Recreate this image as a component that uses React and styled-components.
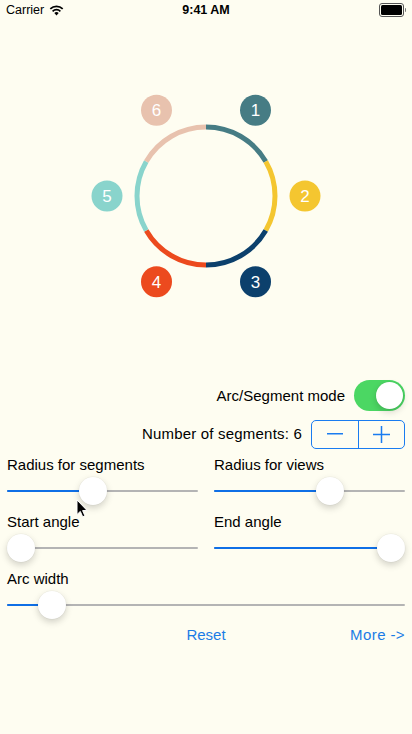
import React from "react";
import styled, { createGlobalStyle } from "styled-components";

const GlobalStyle = createGlobalStyle`
  html, body {
    margin: 0;
    padding: 0;
    background: #fefdf1;
  }
  body {
    font-family: "Liberation Sans", Arial, sans-serif;
    -webkit-font-smoothing: antialiased;
  }
`;

const Screen = styled.div`
  position: relative;
  width: 412px;
  height: 734px;
  background: #fefdf1;
  display: flex;
  flex-direction: column;
  overflow: hidden;
  color: #000;
`;

const StatusBar = styled.div`
  height: 20px;
  display: grid;
  grid-template-columns: 1fr auto 1fr;
  align-items: center;
  padding: 0 6px 0 6px;
  font-size: 12.5px;
`;

const Carrier = styled.div`
  display: flex;
  align-items: center;
  gap: 5px;
`;

const Clock = styled.div`
  font-weight: 700;
`;

const Battery = styled.div`
  justify-self: end;
  display: flex;
  align-items: center;
`;

const BatteryBody = styled.div`
  width: 21px;
  height: 10px;
  border: 1px solid #555;
  border-radius: 3px;
  padding: 1px;
  box-sizing: content-box;
  display: flex;
`;

const BatteryLevel = styled.div`
  flex: 1;
  background: #000;
  border-radius: 1.5px;
`;

const BatteryCap = styled.div`
  width: 1.5px;
  height: 4px;
  margin-left: 1px;
  background: #777;
  border-radius: 0 1px 1px 0;
`;

const Canvas = styled.div`
  height: 360px;
  display: flex;
  justify-content: center;
`;

const Controls = styled.div`
  display: flex;
  flex-direction: column;
  padding: 0 7px;
`;

const RightRow = styled.div`
  display: flex;
  justify-content: flex-end;
  align-items: center;
  gap: ${(p) => p.$gap || 9}px;
  height: ${(p) => p.$height}px;
  margin-top: ${(p) => p.$top || 0}px;
`;

const Label = styled.span`
  font-size: 15px;
  line-height: 18px;
  white-space: nowrap;
  letter-spacing: ${(p) => p.$spacing || 0}px;
`;

const SwitchTrack = styled.div`
  position: relative;
  width: 51px;
  height: 31px;
  border-radius: 16px;
  background: ${(p) => (p.$on ? "#4bd763" : "#e5e5ea")};
`;

const SwitchKnob = styled.div`
  position: absolute;
  top: 2px;
  left: ${(p) => (p.$on ? 22 : 2)}px;
  width: 27px;
  height: 27px;
  border-radius: 50%;
  background: #fff;
  box-shadow: 0 3px 7px rgba(0, 0, 0, 0.16), 0 0 0 0.5px rgba(0, 0, 0, 0.05);
`;

const Stepper = styled.div`
  display: flex;
  width: 94px;
  height: 29px;
  border: 1px solid #1a7cf0;
  border-radius: 5px;
  box-sizing: border-box;
  overflow: hidden;
`;

const StepButton = styled.div`
  flex: 1;
  display: flex;
  align-items: center;
  justify-content: center;
  & + & {
    border-left: 1px solid #1a7cf0;
  }
`;

const SliderGrid = styled.div`
  display: grid;
  grid-template-columns: 1fr 1fr;
  column-gap: 16px;
  row-gap: 5px;
  margin-top: 8px;
`;

const SliderCell = styled.div`
  display: flex;
  flex-direction: column;
  grid-column: ${(p) => (p.$wide ? "1 / span 2" : "auto")};
`;

const SliderBox = styled.div`
  position: relative;
  height: 34px;
  display: flex;
  align-items: center;
`;

const Track = styled.div`
  position: relative;
  flex: 1;
  height: 2px;
  border-radius: 1px;
  background: #b4b4b4;
`;

const Fill = styled.div`
  position: absolute;
  left: 0;
  top: 0;
  bottom: 0;
  border-radius: 1px;
  background: #0f6fe6;
`;

const Thumb = styled.div`
  position: absolute;
  top: 50%;
  width: 28px;
  height: 28px;
  margin: -14px 0 0 -14px;
  border-radius: 50%;
  background: #fff;
  box-shadow: 0 3px 7px rgba(0, 0, 0, 0.18), 0 0 0 0.5px rgba(0, 0, 0, 0.05);
`;

const Footer = styled.div`
  display: grid;
  grid-template-columns: 1fr auto 1fr;
  align-items: center;
  height: 18px;
  margin-top: 4px;
`;

const LinkButton = styled.span`
  font-size: 15px;
  line-height: 18px;
  color: #1a7ce6;
  justify-self: ${(p) => p.$align || "center"};
  letter-spacing: ${(p) => p.$spacing || 0}px;
`;

const Pointer = styled.svg`
  position: absolute;
  left: 76px;
  top: 499px;
`;

const COLORS = ["#467c84", "#f4c630", "#0c406c", "#ec4a1e", "#89d4cc", "#e8c2ae"];

function Ring({ count = 6, cx = 206, cy = 176, r = 69, viewR = 99 }) {
  const step = 360 / count;
  const pt = (deg, rad) => {
    const a = (deg * Math.PI) / 180;
    return [cx + rad * Math.cos(a), cy + rad * Math.sin(a)];
  };
  return (
    <svg width="412" height="360" viewBox="0 0 412 360">
      {COLORS.slice(0, count).map((c, i) => {
        const a0 = -90 + step * i;
        const a1 = a0 + step;
        const [x0, y0] = pt(a0, r);
        const [x1, y1] = pt(a1, r);
        return (
          <path
            key={"s" + i}
            d={`M${x0} ${y0} A${r} ${r} 0 0 1 ${x1} ${y1}`}
            fill="none"
            stroke={c}
            strokeWidth="5"
          />
        );
      })}
      {COLORS.slice(0, count).map((c, i) => {
        const [x, y] = pt(-90 + step * i + step / 2, viewR);
        return (
          <g key={"v" + i}>
            <circle cx={x} cy={y} r="15.5" fill={c} />
            <text
              x={x}
              y={y + 6}
              textAnchor="middle"
              fill="#fff"
              fontSize="17"
              fontFamily="Liberation Sans, Arial, sans-serif"
            >
              {i + 1}
            </text>
          </g>
        );
      })}
    </svg>
  );
}

function Slider({ label, value, wide }) {
  const pos = `calc(14px + ${value} * (100% - 28px))`;
  return (
    <SliderCell $wide={wide}>
      <Label>{label}</Label>
      <SliderBox>
        <Track>
          <Fill style={{ width: pos }} />
          <Thumb style={{ left: pos }} />
        </Track>
      </SliderBox>
    </SliderCell>
  );
}

export default function App() {
  return (
    <Screen>
      <GlobalStyle />
      <StatusBar>
        <Carrier>
          Carrier
          <svg width="15" height="11" viewBox="0 0 15 11">
            <path d="M7.5 10.5 L5.3 8.1 A3.2 3.2 0 0 1 9.7 8.1 Z" fill="#000" />
            <path d="M3.6 6.3 A5.6 5.6 0 0 1 11.4 6.3" stroke="#000" strokeWidth="1.7" fill="none" />
            <path d="M1.3 3.9 A8.8 8.8 0 0 1 13.7 3.9" stroke="#000" strokeWidth="1.7" fill="none" />
          </svg>
        </Carrier>
        <Clock>9:41 AM</Clock>
        <Battery>
          <BatteryBody>
            <BatteryLevel />
          </BatteryBody>
          <BatteryCap />
        </Battery>
      </StatusBar>

      <Canvas>
        <Ring />
      </Canvas>

      <Controls>
        <RightRow $height={31}>
          <Label>Arc/Segment mode</Label>
          <SwitchTrack $on>
            <SwitchKnob $on />
          </SwitchTrack>
        </RightRow>
        <RightRow $height={28} $top={9}>
          <Label $spacing={0.2}>Number of segments: 6</Label>
          <Stepper>
            <StepButton>
              <svg width="16" height="2" viewBox="0 0 16 2">
                <rect width="16" height="1.5" fill="#1a7cf0" />
              </svg>
            </StepButton>
            <StepButton>
              <svg width="17" height="17" viewBox="0 0 17 17">
                <rect x="0" y="7.75" width="17" height="1.5" fill="#1a7cf0" />
                <rect x="7.75" y="0" width="1.5" height="17" fill="#1a7cf0" />
              </svg>
            </StepButton>
          </Stepper>
        </RightRow>

        <SliderGrid>
          <Slider label="Radius for segments" value={0.44} />
          <Slider label="Radius for views" value={0.626} />
          <Slider label="Start angle" value={0} />
          <Slider label="End angle" value={1} />
          <Slider label="Arc width" value={0.084} wide />
        </SliderGrid>

        <Footer>
          <span />
          <LinkButton>Reset</LinkButton>
          <LinkButton $align="end" $spacing={0.4}>More -&gt;</LinkButton>
        </Footer>
      </Controls>

      <Pointer width="12" height="19" viewBox="0 0 12 19">
        <path
          d="M1 1 L1 15.5 L4.3 12.4 L6.7 17.8 L8.9 16.8 L6.6 11.6 L11 11.4 Z"
          fill="#000"
          stroke="#fff"
          strokeWidth="1"
          strokeLinejoin="round"
        />
      </Pointer>
    </Screen>
  );
}
